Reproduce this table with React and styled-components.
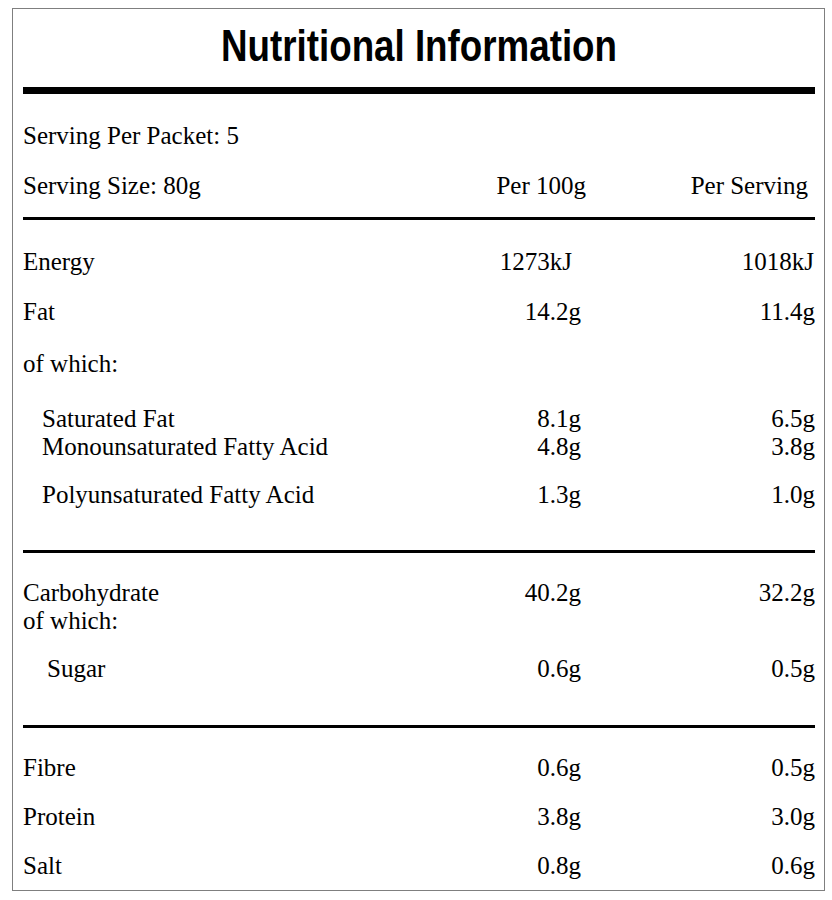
import React from "react";
import styled, { createGlobalStyle } from "styled-components";

const GlobalStyle = createGlobalStyle`
  body {
    margin: 0;
    background: #fff;
  }
`;

// each row: label, per 100g, per serving, spacing above, indent, nudges
const sections = [
  [
    { label: "Energy", a: "1273kJ", b: "1018kJ", top: 28, nudgeA: 9, nudgeB: 1 },
    { label: "Fat", a: "14.2g", b: "11.4g", top: 22 },
    { label: "of which:", top: 24 },
    { label: "Saturated Fat", a: "8.1g", b: "6.5g", top: 27, indent: 19 },
    { label: "Monounsaturated Fatty Acid", a: "4.8g", b: "3.8g", top: 0, indent: 19 },
    { label: "Polyunsaturated Fatty Acid", a: "1.3g", b: "1.0g", top: 20, indent: 19 },
  ],
  [
    { label: "Carbohydrate", a: "40.2g", b: "32.2g", top: 26 },
    { label: "of which:", top: 0 },
    { label: "Sugar", a: "0.6g", b: "0.5g", top: 20, indent: 24 },
  ],
  [
    { label: "Fibre", a: "0.6g", b: "0.5g", top: 26 },
    { label: "Protein", a: "3.8g", b: "3.0g", top: 21 },
    { label: "Salt", a: "0.8g", b: "0.6g", top: 21 },
  ],
];

export default function App() {
  return (
    <>
      <GlobalStyle />
      <Panel>
        <Title>Nutritional Information</Title>
        <Rule $weight={7} $top={19} />

        <Row $top={28}>
          <Label>Serving Per Packet: 5</Label>
        </Row>
        <Row $top={22}>
          <Label>Serving Size: 80g</Label>
          <Amount $nudge={-5}>Per 100g</Amount>
          <Amount $nudge={7}>Per Serving</Amount>
        </Row>
        <Rule $weight={3} $top={17} />

        {sections.map((rows, i) => (
          <React.Fragment key={i}>
            {rows.map((r) => (
              <Row key={r.label + r.top} $top={r.top}>
                <Label $indent={r.indent}>{r.label}</Label>
                <Amount $nudge={r.nudgeA}>{r.a}</Amount>
                <Amount $nudge={r.nudgeB}>{r.b}</Amount>
              </Row>
            ))}
            {i < sections.length - 1 && <Rule $weight={3} $top={i === 0 ? 41 : 42} />}
          </React.Fragment>
        ))}
      </Panel>
    </>
  );
}

const Panel = styled.div`
  box-sizing: border-box;
  width: 813px;
  height: 883px;
  margin: 8px 0 0 12px;
  padding: 0 9px 0 10px;
  border: 1px solid #7f7f7f;
  background: #fff;
  color: #000;
  font-family: "Liberation Serif", "Times New Roman", serif;
  font-size: 25px;
`;

/* no narrow face installed, so squeeze the bold sans to the condensed look */
const Title = styled.h1`
  margin: 15px 0 0;
  font-family: "Liberation Sans", Arial, sans-serif;
  font-weight: 700;
  font-size: 44px;
  line-height: 44px;
  text-align: center;
  transform: scaleX(0.835);
  transform-origin: center;
`;

const Rule = styled.div`
  height: ${(p) => p.$weight}px;
  margin-top: ${(p) => p.$top}px;
  background: #000;
`;

const Row = styled.div`
  display: grid;
  grid-template-columns: 1fr 160px 234px;
  margin-top: ${(p) => p.$top}px;
  line-height: 28px;
  white-space: nowrap;
`;

const Label = styled.div`
  padding-left: ${(p) => p.$indent || 0}px;
`;

const Amount = styled.div`
  text-align: right;
  padding-right: ${(p) => Math.max(p.$nudge || 0, 0)}px;
  margin-right: ${(p) => Math.min(p.$nudge || 0, 0)}px;
`;
